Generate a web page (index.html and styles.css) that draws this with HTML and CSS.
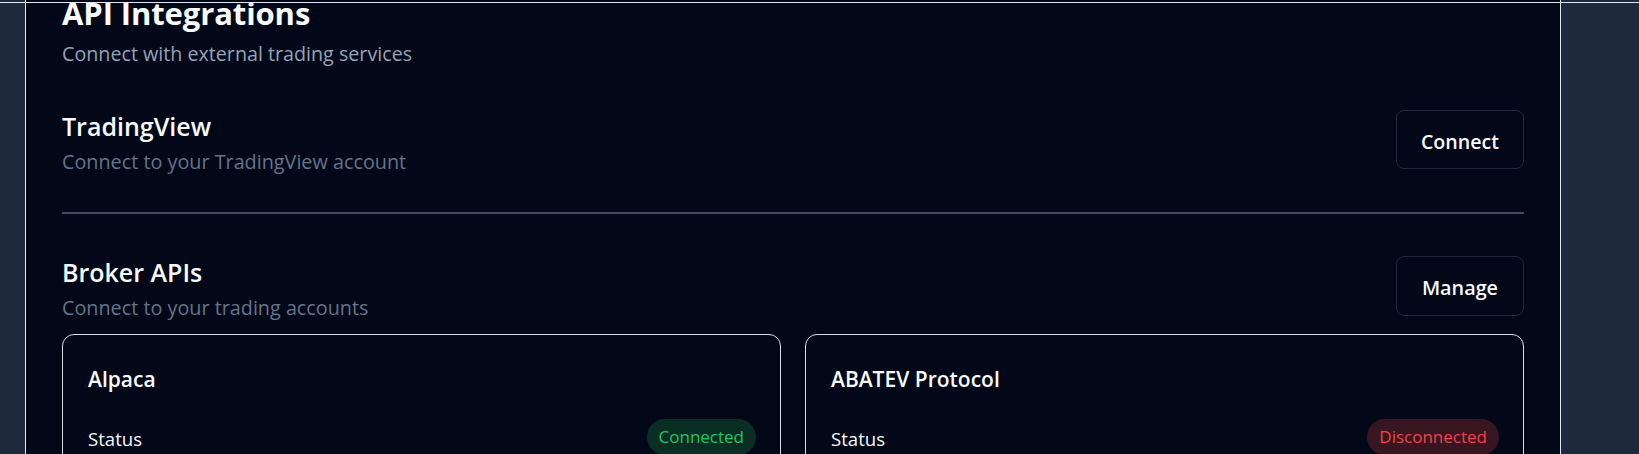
FILE: index.html
```html
<!DOCTYPE html>
<html lang="en">
<head>
<meta charset="utf-8">
<title>API Integrations</title>
<link rel="stylesheet" href="styles.css">
</head>
<body>
<div class="topline"></div>
<main class="page">
  <section class="panel">
    <header class="panel-head">
      <h1 class="panel-title">API Integrations</h1>
      <p class="panel-desc">Connect with external trading services</p>
    </header>

    <div class="integration">
      <div class="integration-text">
        <h2 class="integration-title">TradingView</h2>
        <p class="integration-desc">Connect to your TradingView account</p>
      </div>
      <button class="btn">Connect</button>
    </div>

    <hr class="divider">

    <div class="integration integration-broker">
      <div class="integration-text">
        <h2 class="integration-title">Broker APIs</h2>
        <p class="integration-desc">Connect to your trading accounts</p>
      </div>
      <button class="btn btn-manage">Manage</button>
    </div>

    <div class="broker-grid">
      <div class="broker-card">
        <h3 class="broker-name">Alpaca</h3>
        <div class="broker-row">
          <span class="broker-label">Status</span>
          <span class="badge badge-ok">Connected</span>
        </div>
      </div>
      <div class="broker-card">
        <h3 class="broker-name">ABATEV Protocol</h3>
        <div class="broker-row">
          <span class="broker-label">Status</span>
          <span class="badge badge-off">Disconnected</span>
        </div>
      </div>
    </div>
  </section>
</main>
</body>
</html>
```
FILE: styles.css
```css
* { box-sizing: border-box; }

html, body {
  margin: 0;
  padding: 0;
  height: 100%;
}

body {
  background: #1e293b;
  font-family: "Open Sans", "Noto Sans", sans-serif;
  color: #f8fafc;
  overflow: hidden;
}

.topline {
  position: fixed;
  top: 2px;
  left: 0;
  right: 0;
  height: 1px;
  background: #e2e8f0;
  z-index: 5;
}

.page {
  padding-left: 25px;
}

.panel {
  width: 1536px;
  margin-top: -45px;
  background: #020817;
  border: 1px solid #e2e8f0;
  border-radius: 12px;
  padding: 39px 36px 60px;
}

.panel-head {
  display: flex;
  flex-direction: column;
}

.panel-title {
  margin: 0;
  font-size: 31px;
  font-weight: 700;
  line-height: 36px;
  color: #f8fafc;
  letter-spacing: -0.1px;
}

.panel-desc {
  margin: 9px 0 0;
  font-size: 19.7px;
  line-height: 28px;
  color: #94a3b8;
}

.integration {
  display: flex;
  justify-content: space-between;
  align-items: flex-start;
  margin-top: 42px;
}

.integration-text {
  display: flex;
  flex-direction: column;
}

.integration-title {
  margin: 0;
  font-size: 25px;
  font-weight: 600;
  line-height: 32px;
  color: #f8fafc;
}

.integration-desc {
  margin: 6px 0 0;
  font-size: 19.8px;
  line-height: 28px;
  color: #64748b;
}

.btn {
  height: 59px;
  padding: 0 24px;
  background: #020817;
  border: 1px solid #1e293b;
  border-radius: 8px;
  font-family: inherit;
  font-size: 19.6px;
  font-weight: 600;
  line-height: 57px;
  color: #f8fafc;
  padding-top: 2px;
}

.btn-manage {
  height: 60px;
  padding: 2px 25px 0;
  font-size: 19.8px;
}

.divider {
  margin: 36px 0 0;
  border: 0;
  height: 2px;
  background: #404b5c;
}

.integration-broker {
  margin-top: 42px;
}

.broker-grid {
  display: grid;
  grid-template-columns: 1fr 1fr;
  gap: 24px;
  margin-top: 12px;
}

.broker-card {
  border: 1px solid #d9dfe8;
  border-radius: 12px;
  padding: 30px 24px 24px 25px;
  display: flex;
  flex-direction: column;
}

.broker-name {
  margin: 0;
  font-size: 21px;
  font-weight: 600;
  line-height: 28px;
  color: #f8fafc;
}

.broker-row {
  display: flex;
  justify-content: space-between;
  align-items: center;
  margin-top: 26px;
}

.broker-label {
  font-size: 18.6px;
  line-height: 28px;
  color: #f8fafc;
  padding-top: 4px;
}

.badge {
  display: inline-flex;
  align-items: center;
  height: 36px;
  padding: 0 12px;
  border-radius: 999px;
  font-size: 17px;
  line-height: 36px;
}

.badge-ok {
  background: #0b2e24;
  color: #22c55e;
}

.badge-off {
  background: #381621;
  color: #ef4444;
}
```
